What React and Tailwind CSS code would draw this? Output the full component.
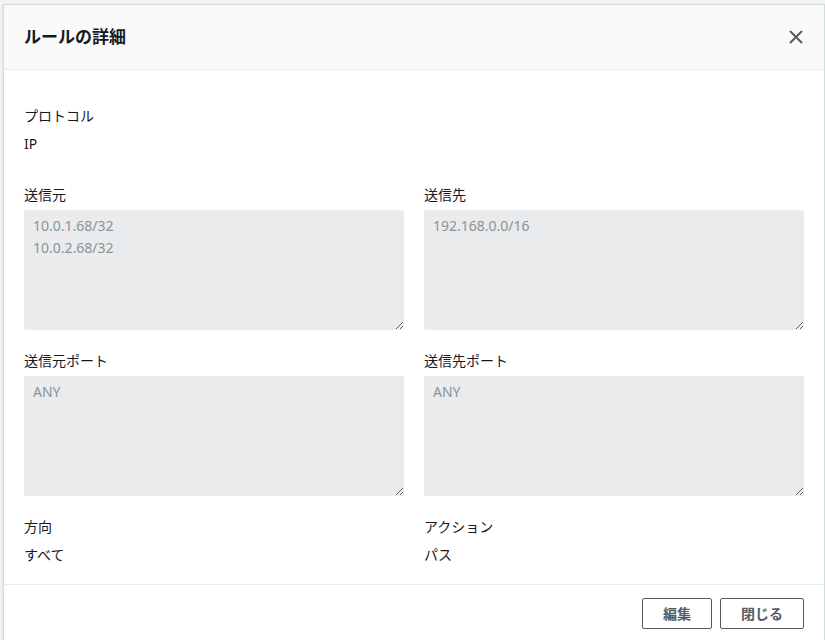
import React from "react";

const font = { fontFamily: '"Noto Sans", "Noto Sans CJK JP", sans-serif' };

const Field = ({ label, children }) => (
  <div className="flex flex-col">
    <span className="text-[14px] leading-[22px] text-[#16191f]">{label}</span>
    <div className="mt-1">{children}</div>
  </div>
);

const Box = ({ lines }) => (
  <textarea
    readOnly
    disabled
    value={lines.join("\n")}
    className="block w-full h-[120px] resize-y rounded-[2px] bg-[#e9ebed] px-[9px] py-[5px] text-[14px] leading-[22px] text-[#879596] outline-none"
    style={font}
  />
);

export default function App() {
  return (
    <div className="min-h-screen bg-[#f2f3f3] pl-[3px] pt-[4px] overflow-hidden" style={font}>
      <div className="bg-white border border-[#d5dbdb] shadow-sm h-[640px]">
        <div className="flex items-center justify-between h-[65px] px-5 bg-[#fafafa] border-b border-[#eaeded]">
          <h2 className="text-[17px] font-bold text-[#16191f]">ルールの詳細</h2>
          <button className="w-4 h-4 flex items-center justify-center text-[#545b64]">
            <svg width="14" height="14" viewBox="0 0 14 14" fill="none" stroke="currentColor" strokeWidth="2">
              <path d="M1 1l12 12M13 1L1 13" />
            </svg>
          </button>
        </div>

        <div className="px-5 pt-[35px] pb-[18px] border-b border-[#eaeded]">
          <Field label="プロトコル">
            <span className="text-[14px] leading-[22px] text-[#16191f]">IP</span>
          </Field>

          <div className="grid grid-cols-2 gap-x-5 mt-[29px]">
            <Field label="送信元">
              <Box lines={["10.0.1.68/32", "10.0.2.68/32"]} />
            </Field>
            <Field label="送信先">
              <Box lines={["192.168.0.0/16"]} />
            </Field>
          </div>

          <div className="grid grid-cols-2 gap-x-5 mt-[20px]">
            <Field label="送信元ポート">
              <Box lines={["ANY"]} />
            </Field>
            <Field label="送信先ポート">
              <Box lines={["ANY"]} />
            </Field>
          </div>

          <div className="grid grid-cols-2 gap-x-5 mt-[20px]">
            <Field label="方向">
              <span className="text-[14px] leading-[22px] text-[#16191f]">すべて</span>
            </Field>
            <Field label="アクション">
              <span className="text-[14px] leading-[22px] text-[#16191f]">パス</span>
            </Field>
          </div>
        </div>

        <div className="flex justify-end gap-2 px-5 pt-[13px]">
          <button className="h-[31px] px-5 border border-[#545b64] rounded-[2px] text-[14px] font-bold text-[#545b64] bg-white">
            編集
          </button>
          <button className="h-[31px] px-5 border border-[#545b64] rounded-[2px] text-[14px] font-bold text-[#545b64] bg-white">
            閉じる
          </button>
        </div>
      </div>
    </div>
  );
}
